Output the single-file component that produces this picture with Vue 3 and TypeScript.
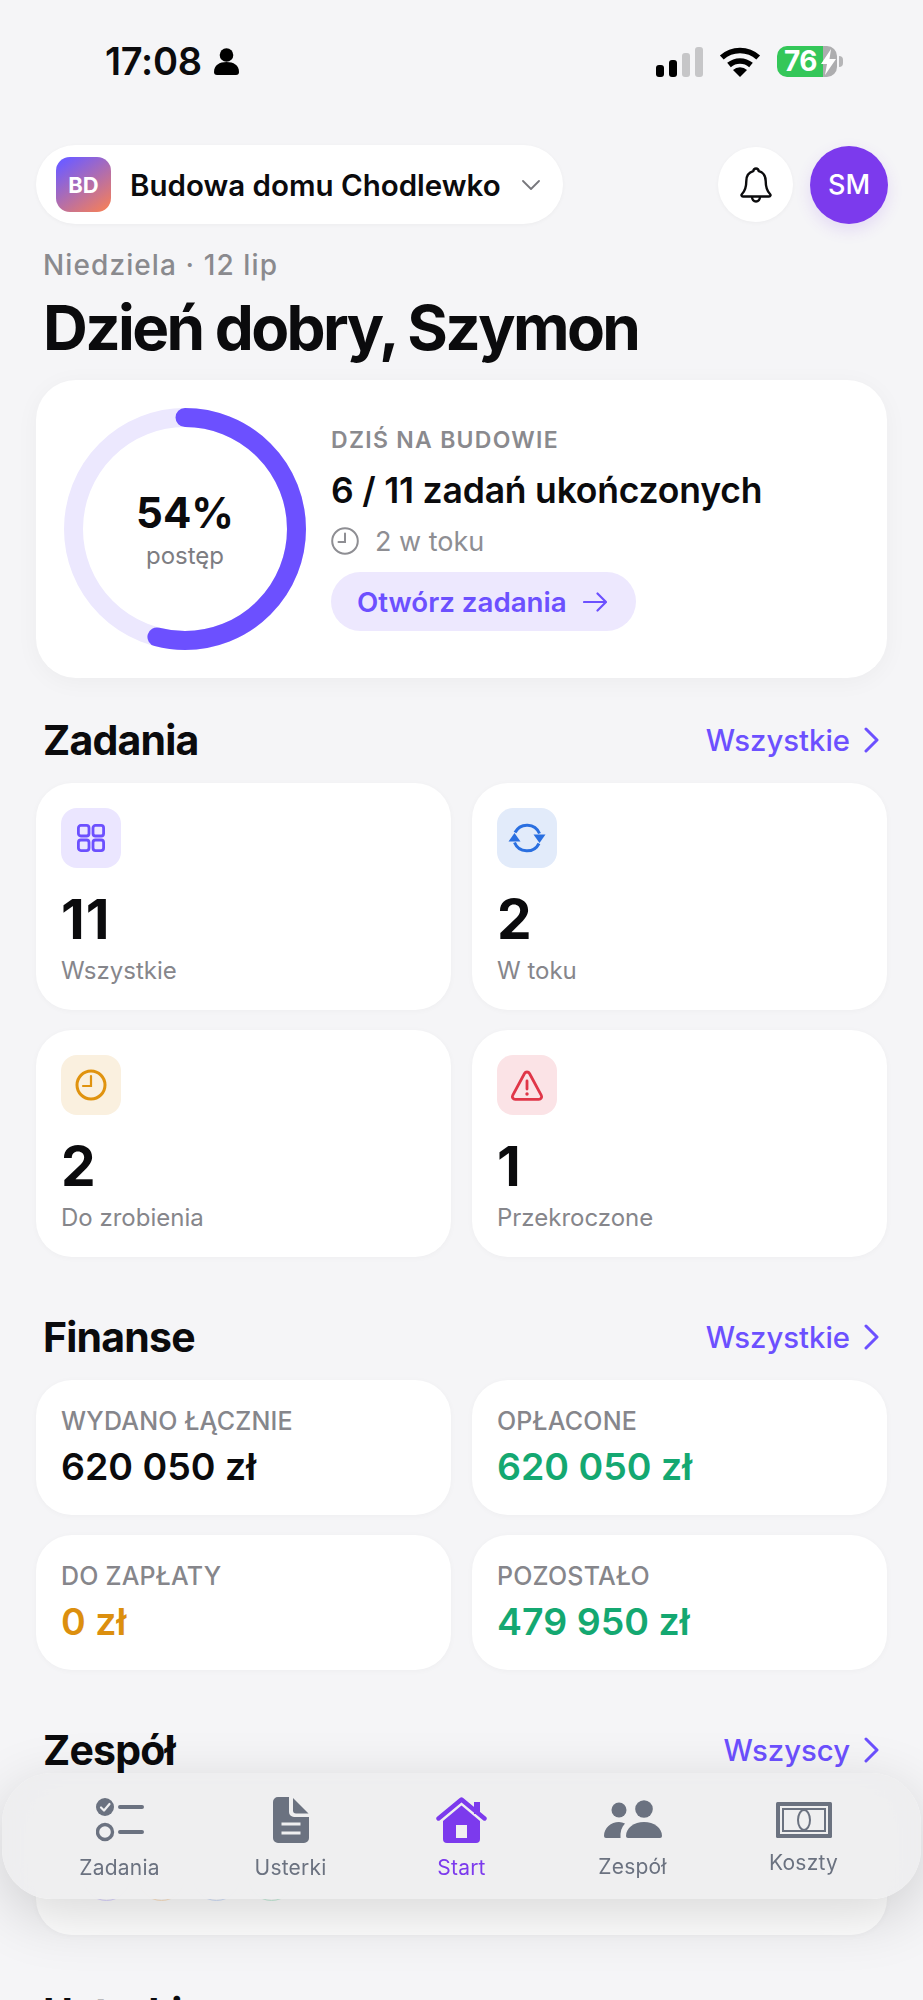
<script setup lang="ts">
interface Stat { key: string; value: string; label: string; tone: string }
interface Money { label: string; value: string; tone: string }
const stats: Stat[] = [
  { key: 'grid', value: '11', label: 'Wszystkie', tone: 'purple' },
  { key: 'sync', value: '2', label: 'W toku', tone: 'blue' },
  { key: 'clock', value: '2', label: 'Do zrobienia', tone: 'orange' },
  { key: 'warn', value: '1', label: 'Przekroczone', tone: 'red' },
]
const money: Money[] = [
  { label: 'WYDANO ŁĄCZNIE', value: '620 050 zł', tone: 'ink' },
  { label: 'OPŁACONE', value: '620 050 zł', tone: 'green' },
  { label: 'DO ZAPŁATY', value: '0 zł', tone: 'amber' },
  { label: 'POZOSTAŁO', value: '479 950 zł', tone: 'green' },
]
const team = ['a', 'b', 'c', 'd']
const radius = 111.5
const circumference = 2 * Math.PI * radius
const dash = `${circumference * 0.54} ${circumference}`
</script>

<template>
  <div class="page">
    <div class="status">
      <div class="time">
        <span>17:08</span>
        <svg width="25" height="27" viewBox="0 0 25 27"><circle cx="12.5" cy="7" r="6.8" fill="#000"/><path d="M0 24c0-7 5.5-10 12.5-10S25 17 25 24c0 2-1 3-3 3H3c-2 0-3-1-3-3Z" fill="#000"/></svg>
      </div>
      <div class="indicators">
        <div class="signal"><i class="b1"></i><i class="b2"></i><i class="b3"></i><i class="b4"></i></div>
        <svg width="42" height="31" viewBox="0 0 42 31" fill="none"><path d="M2.8 11.5a27 27 0 0 1 36.4 0" stroke="#000" stroke-width="5.6"/><path d="M10 19a17 17 0 0 1 22 0" stroke="#000" stroke-width="5.6"/><path d="M21 31l-7-7a10 10 0 0 1 14 0Z" fill="#000"/></svg>
        <div class="battery">
          <span class="level">76</span>
          <svg class="bolt" width="15" height="26" viewBox="0 0 15 26"><path d="M10 0 0 15h6l-2 11L15 10H8.500Z" fill="#fff"/></svg>
        </div>
      </div>
    </div>

    <header class="topbar">
      <div class="project">
        <div class="project-mark">BD</div>
        <span class="project-name">Budowa domu Chodlewko</span>
        <svg width="18" height="10" viewBox="0 0 18 10" fill="none"><path d="M1 1l8 8 8-8" stroke="#77777c" stroke-width="1.8" stroke-linecap="round" stroke-linejoin="round"/></svg>
      </div>
      <div class="actions">
        <button class="bell">
          <svg width="34" height="37" viewBox="0 0 34 37" fill="none" stroke="#0b0b0d" stroke-width="2.400" stroke-linejoin="round"><path d="M17 2.500c-1.500 0-2.500 1-2.700 2.600C9.500 6.400 7.300 10.500 7.300 15c0 7-1.300 10-4.300 13-1 1-.5 2.500 1 2.500h26c1.500 0 2-1.500 1-2.500-3-3-4.300-6-4.300-13 0-4.500-2.200-8.600-7-9.900C19.500 3.500 18.500 2.500 17 2.500Z"/><path d="M13 30.500c0 3 1.800 5 4 5s4-2 4-5"/></svg>
        </button>
        <div class="avatar">SM</div>
      </div>
    </header>

    <p class="date">Niedziela · 12 lip</p>
    <h1 class="hello">Dzień dobry, Szymon</h1>

    <section class="hero">
      <div class="ring">
        <svg width="242" height="242" viewBox="0 0 242 242" fill="none">
          <circle cx="121" cy="121" :r="radius" stroke="#ece8fe" stroke-width="19"/>
          <circle cx="121" cy="121" :r="radius" stroke="#6c50ff" stroke-width="19" stroke-linecap="round" :stroke-dasharray="dash" transform="rotate(-90 121 121)"/>
        </svg>
        <div class="ring-text">
          <strong>54%</strong>
          <span>postęp</span>
        </div>
      </div>
      <div class="hero-body">
        <div class="eyebrow">DZIŚ NA BUDOWIE</div>
        <div class="hero-title">6 / 11 zadań ukończonych</div>
        <div class="hero-meta">
          <svg width="28" height="28" viewBox="0 0 28 28" fill="none" stroke="#8e8e93" stroke-width="2" stroke-linecap="round"><circle cx="14" cy="14" r="12.800"/><path d="M14 6.500V15H7.500"/></svg>
          <span>2 w toku</span>
        </div>
        <button class="cta">
          <span>Otwórz zadania</span>
          <svg width="24" height="20" viewBox="0 0 24 20" fill="none" stroke="#6c50ff" stroke-width="2.200" stroke-linecap="round" stroke-linejoin="round"><path d="M1 10h22M14.500 1.500 23 10l-8.500 8.500"/></svg>
        </button>
      </div>
    </section>

    <section class="block first">
      <div class="block-head">
        <h2>Zadania</h2>
        <a class="more">Wszystkie<svg width="17" height="26" viewBox="0 0 17 26" fill="none"><path d="M3 2l11 11L3 24" stroke="#6c50ff" stroke-width="3" stroke-linecap="round" stroke-linejoin="round"/></svg></a>
      </div>
      <div class="grid">
        <div v-for="s in stats" :key="s.key" class="card stat">
          <div class="stat-icon" :class="s.tone">
            <svg v-if="s.key === 'grid'" width="30" height="30" viewBox="0 0 30 30" fill="none" stroke="#6c50ff" stroke-width="2.800"><rect x="2.400" y="2.400" width="10.600" height="10.600" rx="2.500"/><rect x="17" y="2.400" width="10.600" height="10.600" rx="2.500"/><rect x="2.400" y="17" width="10.600" height="10.600" rx="2.500"/><rect x="17" y="17" width="10.600" height="10.600" rx="2.500"/></svg>
            <svg v-else-if="s.key === 'sync'" width="38" height="32" viewBox="0 0 38 32" fill="none"><path d="M7 10.500A13.500 13.500 0 0 1 31.500 11.500" stroke="#2a6fe0" stroke-width="3"/><path d="M31 21.500A13.500 13.500 0 0 1 6.500 20.500" stroke="#2a6fe0" stroke-width="3"/><path d="M25.500 12.500h12L31.500 21Z" fill="#2a6fe0"/><path d="M.5 19.500h12L6.500 11Z" fill="#2a6fe0"/></svg>
            <svg v-else-if="s.key === 'clock'" width="32" height="32" viewBox="0 0 32 32" fill="none" stroke="#e0930f" stroke-width="3" stroke-linecap="round"><circle cx="16" cy="16" r="14"/><path d="M16 7v10H8" stroke-width="2.200"/></svg>
            <svg v-else width="34" height="31" viewBox="0 0 34 31" fill="none" stroke="#e03648" stroke-width="2.800" stroke-linejoin="round"><path d="M14.500 3.500c1.100-2 3.900-2 5 0l11.800 21.800c1 1.900-.3 4-2.500 4H5.200c-2.200 0-3.500-2.100-2.500-4Z"/><path d="M17 11v8" stroke-linecap="round"/><circle cx="17" cy="24" r="1.700" fill="#e03648" stroke="none"/></svg>
          </div>
          <div class="stat-value">{{ s.value }}</div>
          <div class="stat-label">{{ s.label }}</div>
        </div>
      </div>
    </section>

    <section class="block">
      <div class="block-head">
        <h2>Finanse</h2>
        <a class="more">Wszystkie<svg width="17" height="26" viewBox="0 0 17 26" fill="none"><path d="M3 2l11 11L3 24" stroke="#6c50ff" stroke-width="3" stroke-linecap="round" stroke-linejoin="round"/></svg></a>
      </div>
      <div class="grid">
        <div v-for="m in money" :key="m.label" class="card fin">
          <div class="fin-label">{{ m.label }}</div>
          <div class="fin-value" :class="m.tone">{{ m.value }}</div>
        </div>
      </div>
    </section>

    <section class="block">
      <div class="block-head">
        <h2>Zespół</h2>
        <a class="more">Wszyscy<svg width="17" height="26" viewBox="0 0 17 26" fill="none"><path d="M3 2l11 11L3 24" stroke="#6c50ff" stroke-width="3" stroke-linecap="round" stroke-linejoin="round"/></svg></a>
      </div>
      <div class="card team">
        <span v-for="t in team" :key="t" class="member" :class="t"></span>
      </div>
    </section>

    <section class="block last">
      <div class="block-head">
        <h2>Usterki</h2>
      </div>
    </section>

    <nav class="tabbar">
      <div class="tab">
        <svg width="48" height="46" viewBox="0 0 48 46" fill="none"><circle cx="9" cy="10" r="9" fill="#6b7280"/><path d="M5 10.500l3 3 5.500-6.500" stroke="#f0f0f1" stroke-width="2.200" stroke-linecap="round" stroke-linejoin="round"/><circle cx="9" cy="35" r="7.500" stroke="#6b7280" stroke-width="3.400"/><path d="M24 10h22M24 35h22" stroke="#6b7280" stroke-width="4" stroke-linecap="round"/></svg>
        <span>Zadania</span>
      </div>
      <div class="tab">
        <svg width="36" height="46" viewBox="0 0 36 46"><path d="M5 0h11v15a5 5 0 0 0 5 5h15v21a5 5 0 0 1-5 5H5a5 5 0 0 1-5-5V5a5 5 0 0 1 5-5Z" fill="#6b7280"/><path d="M20 1l15.500 15.500H23a3 3 0 0 1-3-3Z" fill="#6b7280"/><path d="M8.500 27h19M8.500 36h19" stroke="#efeff0" stroke-width="3"/></svg>
        <span>Usterki</span>
      </div>
      <div class="tab active">
        <svg width="51" height="46" viewBox="0 0 51 46" fill="none"><rect x="38" y="5" width="6" height="12" fill="#7c3aed"/><path d="M2.500 21.500 25.500 2.500l23 19" stroke="#7c3aed" stroke-width="4.400" stroke-linecap="round" stroke-linejoin="round"/><path d="M7 24 25.500 8.500 44 24v18a4 4 0 0 1-4 4H11a4 4 0 0 1-4-4Z" fill="#7c3aed"/><rect x="20" y="28" width="11" height="13" fill="#f0f0f1"/></svg>
        <span>Start</span>
      </div>
      <div class="tab">
        <svg width="58" height="45" viewBox="0 0 58 45"><circle cx="40" cy="12" r="8.800" fill="#6b7280"/><circle cx="15" cy="13" r="7.500" fill="#6b7280"/><path d="M22 39c0-8 8-14 18-14s18 6 18 14a2 2 0 0 1-2 2H24a2 2 0 0 1-2-2Z" fill="#6b7280"/><path d="M0 39c0-8 7-14 15-14 2 0 4 .5 6 1.500-3.500 3.500-5 8.500-4.500 14.500H2a2 2 0 0 1-2-2Z" fill="#6b7280"/></svg>
        <span>Zespół</span>
      </div>
      <div class="tab">
        <svg width="56" height="41" viewBox="0 0 56 41" fill="none"><rect y="5" width="56" height="36" rx="1.500" fill="#6b7280"/><rect x="4" y="9" width="48" height="28" fill="#efeff0"/><rect x="7" y="12" width="42" height="22" stroke="#6b7280" stroke-width="2"/><ellipse cx="28" cy="23" rx="6" ry="10" stroke="#6b7280" stroke-width="2"/></svg>
        <span>Koszty</span>
      </div>
    </nav>
  </div>
</template>

<style>
html, body { margin: 0; background: #f5f5f7; }
</style>

<style scoped>
.page {
  position: relative;
  box-sizing: border-box;
  width: 923px;
  height: 2000px;
  overflow: hidden;
  padding: 46px 36px 0;
  background: #f5f5f7;
  color: #0b0b0d;
  font-family: Inter, "Liberation Sans", sans-serif;
}
h1, h2, p { margin: 0; }
button { border: 0; font-family: inherit; padding: 0; }

.status {
  display: flex;
  justify-content: space-between;
  align-items: flex-end;
  height: 31px;
  padding: 0 50px 0 69px;
}
.time {
  display: flex;
  align-items: center;
  gap: 12px;
  font-size: 38px;
  font-weight: 600;
  line-height: 31px;
  letter-spacing: -0.3px;
}
.indicators { display: flex; align-items: flex-end; gap: 16px; }
.signal { display: flex; align-items: flex-end; gap: 5px; }
.signal i { display: block; width: 8px; border-radius: 3px; background: #000; }
.signal .b1 { height: 12px; }
.signal .b2 { height: 17px; }
.signal .b3 { height: 24px; background: #c6c6c8; }
.signal .b4 { height: 30px; background: #c6c6c8; }
.battery {
  position: relative;
  display: flex;
  align-items: center;
  width: 60px;
  height: 31px;
  border-radius: 10px;
  background: linear-gradient(90deg, #34c759 0, #34c759 46px, #adadaf 46px);
  color: #fff;
  font-size: 28px;
  font-weight: 700;
  line-height: 31px;
}
.battery::after {
  content: "";
  position: absolute;
  right: -6px;
  top: 10px;
  width: 4px;
  height: 11px;
  border-radius: 0 4px 4px 0;
  background: #b5b5b7;
}
.level { margin-left: 7px; letter-spacing: -0.5px; }
.bolt { position: absolute; left: 44px; top: 3px; }

.topbar {
  display: flex;
  justify-content: space-between;
  align-items: center;
  margin-top: 68px;
  height: 79px;
}
.project {
  box-sizing: border-box;
  display: flex;
  align-items: center;
  width: 527px;
  height: 79px;
  padding-left: 20px;
  border-radius: 40px;
  background: #fff;
  box-shadow: 0 1px 4px rgba(0, 0, 0, 0.04);
}
.project-mark {
  display: flex;
  align-items: center;
  justify-content: center;
  width: 55px;
  height: 55px;
  border-radius: 14px;
  background: linear-gradient(145deg, #6f5cff 10%, #f47f5a 95%);
  color: #fff;
  font-size: 22px;
  font-weight: 700;
}
.project-name {
  margin: 0 21px 0 19px;
  font-size: 29.500px;
  font-weight: 600;
  white-space: nowrap;
}
.actions { display: flex; align-items: center; gap: 17px; margin-right: -1px; }
.bell {
  display: flex;
  align-items: center;
  justify-content: center;
  width: 75px;
  height: 75px;
  border-radius: 50%;
  background: #fff;
  box-shadow: 0 1px 4px rgba(0, 0, 0, 0.04);
}
.avatar {
  display: flex;
  align-items: center;
  justify-content: center;
  width: 78px;
  height: 78px;
  border-radius: 50%;
  background: #7c3aed;
  color: #fff;
  font-size: 27px;
  font-weight: 500;
  box-shadow: 0 6px 16px rgba(124, 58, 237, 0.14);
}

.date {
  margin: 24px 0 0 7px;
  font-size: 28px;
  line-height: 34px;
  font-weight: 500;
  color: #8a8a8e;
  letter-spacing: 1.100px;
}
.hello {
  margin: 11px 0 0 7px;
  font-size: 62px;
  line-height: 70px;
  font-weight: 700;
  letter-spacing: -2.600px;
  white-space: nowrap;
}

.hero {
  box-sizing: border-box;
  display: flex;
  align-items: flex-start;
  height: 298px;
  margin-top: 17px;
  padding: 28px 28px;
  border-radius: 40px;
  background: #fff;
  box-shadow: 0 4px 24px rgba(0, 0, 0, 0.04);
}
.ring { position: relative; width: 242px; height: 242px; flex: none; }
.ring svg { display: block; }
.ring-text {
  position: absolute;
  inset: 0;
  display: flex;
  flex-direction: column;
  align-items: center;
  justify-content: center;
}
.ring-text strong { font-size: 42px; line-height: 50px; font-weight: 700; }
.ring-text span { margin-top: 3px; font-size: 24px; line-height: 30px; color: #7d7d82; }
.hero-body { margin: 18px 0 0 25px; display: flex; flex-direction: column; align-items: flex-start; }
.eyebrow {
  font-size: 23px;
  line-height: 28px;
  font-weight: 600;
  color: #8a8a8e;
  letter-spacing: 1.300px;
}
.hero-title {
  margin-top: 15px;
  font-size: 35.500px;
  line-height: 44px;
  font-weight: 600;
  letter-spacing: -0.2px;
  white-space: nowrap;
}
.hero-meta {
  display: flex;
  align-items: center;
  gap: 16px;
  margin-top: 10px;
  height: 36px;
  font-size: 27px;
  color: #8e8e93;
}
.cta {
  display: flex;
  align-items: center;
  gap: 16px;
  height: 59px;
  margin-top: 13px;
  padding: 0 29px 0 26px;
  border-radius: 30px;
  background: #ede8fe;
  color: #6c50ff;
  font-size: 27.700px;
  font-weight: 600;
}

.block { margin-top: 58px; }
.block.first { margin-top: 40px; }
.block.last { margin-top: 56px; }
.block-head {
  box-sizing: border-box;
  display: flex;
  justify-content: space-between;
  align-items: center;
  height: 52px;
  padding-bottom: 8px;
  margin: 0 7px 13px 7px;
}
.block-head h2 {
  font-size: 41px;
  line-height: 44px;
  font-weight: 700;
  letter-spacing: -0.8px;
}
.more {
  display: flex;
  align-items: center;
  gap: 13px;
  font-size: 29.300px;
  font-weight: 500;
  color: #6c50ff;
}
.grid {
  display: grid;
  grid-template-columns: 415px 415px;
  gap: 20px 21px;
}
.card {
  border-radius: 36px;
  background: #fff;
  box-shadow: 0 1px 6px rgba(0, 0, 0, 0.03);
}
.stat { box-sizing: border-box; height: 227px; padding: 25px 25px 0; }
.stat-icon {
  display: flex;
  align-items: center;
  justify-content: center;
  width: 60px;
  height: 60px;
  border-radius: 16px;
}
.stat-icon.purple { background: #ebe6ff; }
.stat-icon.blue { background: #e2ebfa; }
.stat-icon.orange { background: #faf0df; }
.stat-icon.red { background: #fbe3e6; }
.stat-value {
  margin-top: 19px;
  font-size: 55px;
  line-height: 64px;
  font-weight: 700;
  letter-spacing: 1px;
}
.stat-label {
  margin-top: 5px;
  font-size: 24px;
  line-height: 30px;
  color: #86868b;
}
.fin { box-sizing: border-box; height: 135px; padding: 26px 25px 0; }
.fin-label {
  font-size: 25px;
  line-height: 30px;
  font-weight: 500;
  color: #86868b;
  letter-spacing: 0.2px;
}
.fin-value {
  margin-top: 7px;
  font-size: 37.500px;
  line-height: 48px;
  font-weight: 600;
  white-space: nowrap;
}
.ink { color: #0b0b0d; }
.green { color: #14a871; }
.amber { color: #dc8f0e; }

.team {
  box-sizing: border-box;
  display: flex;
  align-items: flex-end;
  gap: 8px;
  height: 142px;
  padding: 0 0 34px 47px;
}
.member { width: 45px; height: 45px; border-radius: 50%; border: 1.500px solid; }
.member.a { border-color: #dcd5ff; }
.member.b { border-color: #fde3c5; }
.member.c { border-color: #d3e1fb; }
.member.d { border-color: #c8efdc; }

.tabbar {
  position: absolute;
  left: 2px;
  top: 1773px;
  box-sizing: border-box;
  display: grid;
  grid-template-columns: repeat(5, 171px);
  justify-content: center;
  width: 919px;
  height: 126px;
  padding-top: 24px;
  border-radius: 50px;
  background: rgba(237, 237, 238, 0.88);
  backdrop-filter: blur(18px);
  box-shadow: 0 16px 60px rgba(0, 0, 0, 0.16);
}
.tab {
  display: flex;
  flex-direction: column;
  align-items: center;
  gap: 12px;
  font-size: 21px;
  line-height: 26px;
  color: #6b7280;
  letter-spacing: 0.2px;
}
.tab svg { display: block; flex: none; }
.tab.active { color: #7c3aed; }
</style>
